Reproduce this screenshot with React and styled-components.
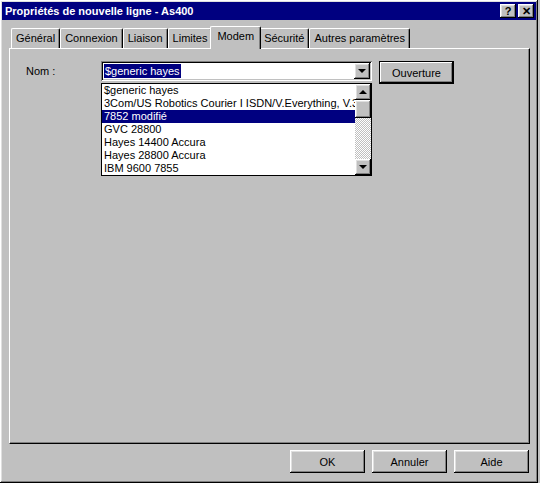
import React from "react";
import styled, { createGlobalStyle } from "styled-components";

const Global = createGlobalStyle`
  html, body { margin: 0; padding: 0; background: #c0c0c0; }
  body { font-family: "Liberation Sans", Arial, sans-serif; font-size: 11px; color: #000; }
  * { box-sizing: border-box; }
`;

const raised = `
  box-shadow: inset -1px -1px #000, inset 1px 1px #fff, inset -2px -2px #808080, inset 2px 2px #dfdfdf;
`;

const Window = styled.div`
  width: 538px;
  height: 483px;
  padding: 2px;
  background: #c0c0c0;
  ${raised}
  display: flex;
  flex-direction: column;
`;

const TitleBar = styled.div`
  height: 18px;
  background: #000080;
  color: #fff;
  display: flex;
  align-items: center;
  padding: 0 2px 0 3px;
  font-weight: bold;
  font-size: 11px;
`;

const Title = styled.div`
  flex: 1;
  white-space: nowrap;
`;

const TitleButton = styled.div`
  width: 16px;
  height: 14px;
  background: #c0c0c0;
  color: #000;
  ${raised}
  display: flex;
  align-items: center;
  justify-content: center;
  font-size: 11px;
  font-weight: bold;
  margin-left: ${(p) => (p.$gap ? "2px" : "0")};
  line-height: 1;
`;

const Body = styled.div`
  flex: 1;
  display: flex;
  flex-direction: column;
  padding: 6px 6px 0 7px;
`;

const TabRow = styled.div`
  display: flex;
  height: 22px;
  padding-left: 2px;
  align-items: flex-end;
  position: relative;
  z-index: 1;
`;

const Tab = styled.div`
  height: ${(p) => (p.$active ? "23px" : "20px")};
  margin: ${(p) => (p.$active ? "0 -2px -1px -2px" : "0")};
  padding: ${(p) => (p.$active ? "3px 6px 0" : "3px 4px 0")};
  background: #c0c0c0;
  border-top: 1px solid #fff;
  border-left: 1px solid #fff;
  border-right: 1px solid #000;
  border-top-left-radius: 2px;
  border-top-right-radius: 2px;
  box-shadow: inset -1px 0 #808080;
  white-space: nowrap;
  font-size: 11px;
  position: relative;
  z-index: ${(p) => (p.$active ? 2 : 1)};
`;

const Panel = styled.div`
  height: 396px;
  width: 521px;
  border-top: 1px solid #fff;
  border-left: 1px solid #fff;
  border-right: 1px solid #000;
  border-bottom: 1px solid #000;
  box-shadow: inset -1px -1px #808080;
  padding: 12px 0 0 16px;
  display: flex;
  align-items: flex-start;
`;

const Label = styled.div`
  width: 75px;
  padding-top: 4px;
  font-size: 11px;
`;

const ComboWrap = styled.div`
  width: 271px;
  display: flex;
  flex-direction: column;
`;

const ComboField = styled.div`
  height: 20px;
  background: #fff;
  box-shadow: inset 1px 1px #808080, inset -1px -1px #fff, inset 2px 2px #000, inset -2px -2px #c0c0c0;
  display: flex;
  align-items: center;
  padding: 2px 2px 2px 3px;
`;

const Selected = styled.span`
  background: #000080;
  color: #fff;
  font-size: 11px;
  padding: 0 1px;
  line-height: 14px;
  flex: 0 0 auto;
`;

const Spacer = styled.div`
  flex: 1;
`;

const ArrowButton = styled.div`
  width: 16px;
  height: 16px;
  background: #c0c0c0;
  ${raised}
  display: flex;
  align-items: center;
  justify-content: center;
  flex: 0 0 auto;
`;

const Tri = styled.div`
  width: 0;
  height: 0;
  border-left: 4px solid transparent;
  border-right: 4px solid transparent;
  ${(p) => (p.$up ? "border-bottom: 4px solid #000;" : "border-top: 4px solid #000;")}
`;

const List = styled.div`
  margin-top: 2px;
  height: 93px;
  border: 1px solid #000;
  background: #fff;
  display: flex;
`;

const Items = styled.div`
  flex: 1;
  overflow: hidden;
`;

const Item = styled.div`
  height: 13px;
  line-height: 13px;
  padding-left: 2px;
  font-size: 11px;
  white-space: nowrap;
  overflow: hidden;
  background: ${(p) => (p.$sel ? "#000080" : "transparent")};
  color: ${(p) => (p.$sel ? "#fff" : "#000")};
`;

const ScrollBar = styled.div`
  width: 16px;
  display: flex;
  flex-direction: column;
`;

const Track = styled.div`
  flex: 1;
  background: repeating-conic-gradient(#fff 0 25%, #c0c0c0 0 50%) 0 0 / 2px 2px;
`;

const Thumb = styled.div`
  height: 18px;
  background: #c0c0c0;
  ${raised}
`;

const Button = styled.div`
  width: 75px;
  height: 23px;
  background: #c0c0c0;
  display: flex;
  align-items: center;
  justify-content: center;
  font-size: 11px;
  ${(p) =>
    p.$default
      ? "box-shadow: inset -1px -1px #000, inset 1px 1px #000, inset -2px -2px #000, inset 2px 2px #fff, inset -3px -3px #808080;"
      : raised}
`;

const SideButton = styled(Button)`
  margin-left: 7px;
`;

const Footer = styled.div`
  display: flex;
  justify-content: flex-end;
  gap: 7px;
  padding: 6px 1px 0 0;
`;

const modems = [
  "$generic hayes",
  "3Com/US Robotics Courier I ISDN/V.Everything, V.34",
  "7852 modifié",
  "GVC 28800",
  "Hayes 14400 Accura",
  "Hayes 28800 Accura",
  "IBM  9600 7855",
];

const tabs = ["Général", "Connexion", "Liaison", "Limites", "Modem", "Sécurité", "Autres paramètres"];

export default function App() {
  return (
    <>
      <Global />
      <Window>
        <TitleBar>
          <Title>Propriétés de nouvelle ligne - As400</Title>
          <TitleButton>?</TitleButton>
          <TitleButton $gap>✕</TitleButton>
        </TitleBar>
        <Body>
          <TabRow>
            {tabs.map((t) => (
              <Tab key={t} $active={t === "Modem"}>
                {t}
              </Tab>
            ))}
          </TabRow>
          <Panel>
            <Label>Nom :</Label>
            <ComboWrap>
              <ComboField>
                <Selected>$generic hayes</Selected>
                <Spacer />
                <ArrowButton>
                  <Tri />
                </ArrowButton>
              </ComboField>
              <List>
                <Items>
                  {modems.map((m, i) => (
                    <Item key={m} $sel={i === 2}>
                      {m}
                    </Item>
                  ))}
                </Items>
                <ScrollBar>
                  <ArrowButton>
                    <Tri $up />
                  </ArrowButton>
                  <Thumb />
                  <Track />
                  <ArrowButton>
                    <Tri />
                  </ArrowButton>
                </ScrollBar>
              </List>
            </ComboWrap>
            <SideButton $default>Ouverture</SideButton>
          </Panel>
          <Footer>
            <Button>OK</Button>
            <Button>Annuler</Button>
            <Button>Aide</Button>
          </Footer>
        </Body>
      </Window>
    </>
  );
}
